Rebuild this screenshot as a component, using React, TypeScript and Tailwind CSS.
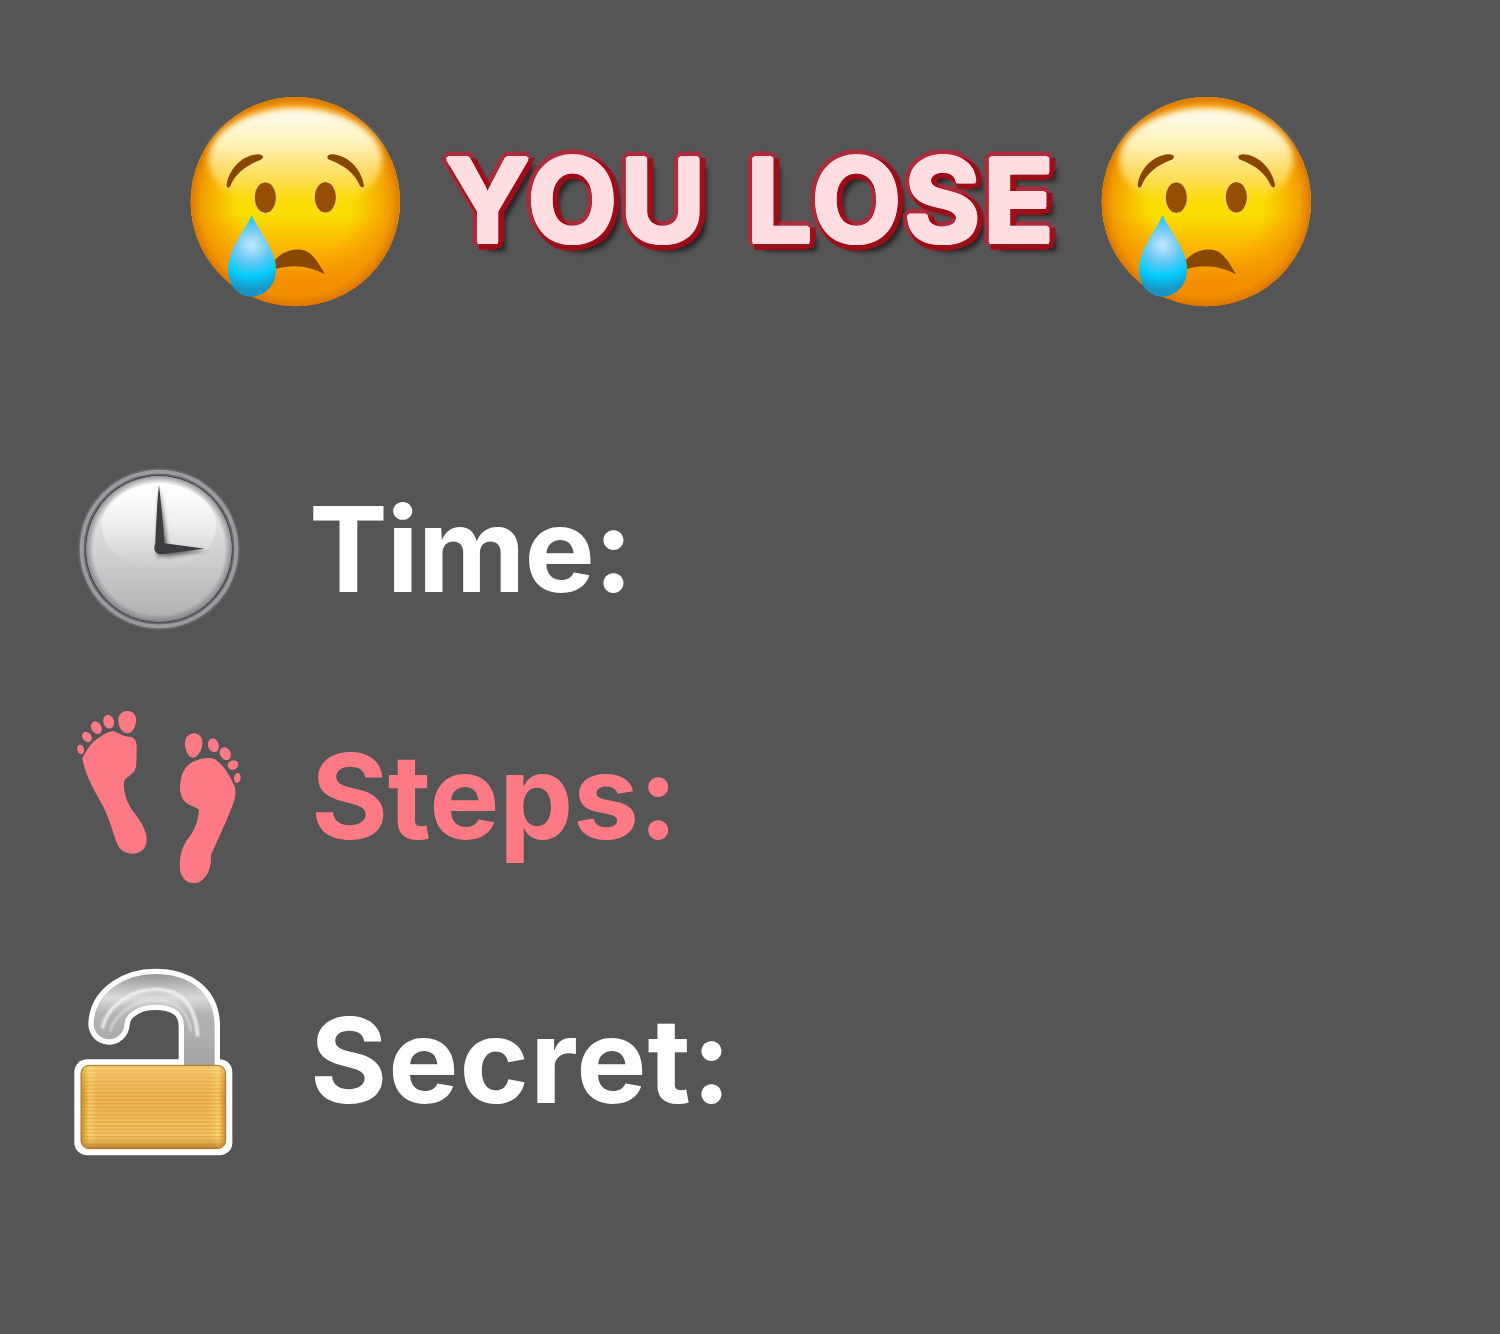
const titleGlow =
  '[text-shadow:2px_0_0_#ffdde0,-2px_0_0_#ffdde0,0_2px_0_#ffdde0,0_-2px_0_#ffdde0,1.5px_1.5px_0_#ffdde0,-1.5px_1.5px_0_#ffdde0,1.5px_-1.5px_0_#ffdde0,-1.5px_-1.5px_0_#ffdde0,8px_0_1px_#9c0f18,0_8px_1px_#9c0f18,6px_6px_1px_#9c0f18,6px_3px_1px_#9c0f18,3px_6px_1px_#9c0f18,-6px_0_1px_#ad2b3b,6px_0_1px_#ad2b3b,0_-6px_1px_#ad2b3b,0_6px_1px_#ad2b3b,4px_4px_1px_#ad2b3b,-4px_4px_1px_#ad2b3b,4px_-4px_1px_#ad2b3b,-4px_-4px_1px_#ad2b3b,-6px_2px_1px_#ad2b3b,-6px_-2px_1px_#ad2b3b,2px_-6px_1px_#ad2b3b,-2px_-6px_1px_#ad2b3b,9px_9px_5px_#00000099]';

function SadFace() {
  return (
    <svg viewBox="0 0 690 690" className="h-[230px] w-[230px] shrink-0">
      <defs>
        <linearGradient id="faceBase" x1="0" y1="37" x2="0" y2="662" gradientUnits="userSpaceOnUse">
          <stop offset="0" stopColor="#fcc400" />
          <stop offset="0.56" stopColor="#f9de00" />
          <stop offset="0.78" stopColor="#fba800" />
          <stop offset="1" stopColor="#ea6400" />
        </linearGradient>
        <radialGradient id="faceEdge" cx="346" cy="350" r="314" gradientUnits="userSpaceOnUse">
          <stop offset="0.55" stopColor="#f59a00" stopOpacity="0" />
          <stop offset="0.9" stopColor="#f29400" stopOpacity="0.85" />
          <stop offset="1" stopColor="#dc7800" />
        </radialGradient>
        <linearGradient id="faceShine" x1="0" y1="68" x2="0" y2="385" gradientUnits="userSpaceOnUse">
          <stop offset="0" stopColor="#fffdf5" />
          <stop offset="0.35" stopColor="#fff2b8" />
          <stop offset="0.7" stopColor="#fde070" stopOpacity="0.7" />
          <stop offset="1" stopColor="#ffe400" stopOpacity="0" />
        </linearGradient>
        <radialGradient id="tearFill" cx="215" cy="480" r="135" gradientUnits="userSpaceOnUse">
          <stop offset="0" stopColor="#c6e6ff" />
          <stop offset="0.4" stopColor="#62c8f4" />
          <stop offset="0.7" stopColor="#02cdfb" />
          <stop offset="1" stopColor="#1a96c6" />
        </radialGradient>
        <filter id="shineBlur">
          <feGaussianBlur stdDeviation="10" />
        </filter>
      </defs>
      <circle cx="346" cy="350" r="314" fill="url(#faceBase)" />
      <circle cx="346" cy="350" r="314" fill="url(#faceEdge)" />
      <ellipse cx="346" cy="225" rx="260" ry="156" fill="url(#faceShine)" filter="url(#shineBlur)" />
      <path d="M140 300C145 260 180 210 235 208C255 210 250 222 240 225C200 240 165 265 150 305C145 310 140 308 140 300Z" fill="#8a4600" />
      <path d="M552 300C545 260 510 210 455 208C437 210 440 222 450 225C490 240 525 265 540 303C547 310 552 307 552 300Z" fill="#8a4600" />
      <ellipse cx="256" cy="338" rx="33" ry="47" fill="#964e05" stroke="#ffeeb0" strokeWidth="2" />
      <ellipse cx="436" cy="337" rx="33" ry="47" fill="#964e05" stroke="#ffeeb0" strokeWidth="2" />
      <path d="M285 525C310 495 365 480 395 510C410 525 425 550 435 568C395 545 340 535 288 552Z" fill="#8a4700" />
      <path d="M215 390C230 430 288 490 288 555C288 605 250 635 215 635C175 635 144 600 144 555C144 490 200 430 215 390Z" fill="url(#tearFill)" />
    </svg>
  );
}

function ClockIcon() {
  return (
    <svg viewBox="0 0 540 540" className="ml-[5px] h-[180px] w-[180px] shrink-0">
      <defs>
        <linearGradient id="clockFace" x1="0" y1="50" x2="0" y2="485" gradientUnits="userSpaceOnUse">
          <stop offset="0" stopColor="#ffffff" />
          <stop offset="0.4" stopColor="#dadadb" />
          <stop offset="1" stopColor="#aeafb1" />
        </linearGradient>
        <linearGradient id="clockShine" x1="0" y1="70" x2="0" y2="325" gradientUnits="userSpaceOnUse">
          <stop offset="0" stopColor="#ffffff" stopOpacity="0.8" />
          <stop offset="1" stopColor="#ffffff" stopOpacity="0.02" />
        </linearGradient>
        <radialGradient id="clockRim" cx="267" cy="267" r="218" gradientUnits="userSpaceOnUse">
          <stop offset="0.9" stopColor="#77787a" stopOpacity="0" />
          <stop offset="1" stopColor="#77787a" stopOpacity="0.75" />
        </radialGradient>
        <filter id="handShadow" x="-30%" y="-30%" width="160%" height="160%">
          <feGaussianBlur stdDeviation="6" />
        </filter>
      </defs>
      <circle cx="267" cy="267" r="243" fill="#66676a" />
      <circle cx="267" cy="267" r="232" fill="none" stroke="#9a9b9d" strokeWidth="12" />
      <circle cx="267" cy="267" r="221" fill="#3f4042" />
      <circle cx="267" cy="267" r="218" fill="url(#clockFace)" />
      <circle cx="267" cy="267" r="218" fill="url(#clockRim)" />
      <ellipse cx="267" cy="198" rx="172" ry="127" fill="url(#clockShine)" />
      <path d="M268 82L292 255L290 285L262 290L262 250ZM262 258L412 272L290 290Z" fill="#000000" opacity="0.55" filter="url(#handShadow)" />
      <path d="M267 75C271 105 280 200 284 250L403 266L280 282C266 284 254 278 253 266C253 260 254 255 256 250C258 200 263 105 267 75Z" fill="#3d3d41" />
    </svg>
  );
}

function FeetIcon() {
  return (
    <svg viewBox="0 0 570 585" className="h-[195px] w-[190px] shrink-0" fill="#ff7a85">
      <path d="M52 175C60 160 75 130 95 118C115 105 135 90 150 95C165 100 175 110 195 110C210 112 215 125 215 140C215 165 215 190 212 205C205 225 185 230 178 242C172 265 185 310 205 335C225 360 245 390 245 420C245 445 225 462 200 461C175 460 160 445 152 420C140 385 130 350 115 320C90 275 60 225 52 175Z" />
      <path d="M160 60C160 42 172 33 188 33C205 33 214 45 213 62C212 80 202 100 188 100C172 100 160 80 160 60Z" />
      <ellipse cx="131" cy="65" rx="16" ry="21" transform="rotate(-15 131 65)" />
      <ellipse cx="94" cy="83" rx="15" ry="20" transform="rotate(-30 94 83)" />
      <ellipse cx="66" cy="111" rx="13" ry="17" transform="rotate(-40 66 111)" />
      <ellipse cx="47" cy="148" rx="10" ry="14" transform="rotate(-10 47 148)" />
      <path d="M345 265C345 225 360 195 385 185C405 175 430 170 450 178C475 195 495 225 510 262C515 290 505 310 495 335C475 385 455 425 438 465C440 495 430 530 405 545C375 558 350 540 345 510C342 475 350 440 370 415C390 390 400 360 402 330C395 320 375 318 360 305C350 295 345 280 345 265Z" />
      <path d="M360 125C362 108 375 100 390 100C405 102 413 115 412 132C410 152 398 173 384 173C368 172 358 145 360 125Z" />
      <ellipse cx="445" cy="136" rx="16" ry="21" transform="rotate(-15 445 136)" />
      <ellipse cx="481" cy="161" rx="16" ry="20" transform="rotate(-30 481 161)" />
      <ellipse cx="504" cy="195" rx="16" ry="14" transform="rotate(-25 504 195)" />
      <ellipse cx="517" cy="234" rx="10" ry="15" transform="rotate(10 517 234)" />
    </svg>
  );
}

function LockIcon() {
  const shackle = 'M132 192C135 125 205 88 270 88C350 88 403 125 403 200L403 330';
  return (
    <svg viewBox="0 0 540 615" className="h-[205px] w-[180px] shrink-0">
      <defs>
        <linearGradient id="lockMetal" x1="0" y1="45" x2="0" y2="320" gradientUnits="userSpaceOnUse">
          <stop offset="0" stopColor="#9a9b9c" />
          <stop offset="0.25" stopColor="#dadada" />
          <stop offset="0.42" stopColor="#b2b3b4" />
          <stop offset="1" stopColor="#a3a5a6" />
        </linearGradient>
        <linearGradient id="lockBody" x1="48" y1="0" x2="482" y2="0" gradientUnits="userSpaceOnUse">
          <stop offset="0" stopColor="#c4842a" />
          <stop offset="0.06" stopColor="#f8dc74" />
          <stop offset="0.11" stopColor="#efc162" />
          <stop offset="0.89" stopColor="#efc162" />
          <stop offset="0.95" stopColor="#f8dc74" />
          <stop offset="1" stopColor="#c4842a" />
        </linearGradient>
        <linearGradient id="lockShade" x1="0" y1="316" x2="0" y2="566" gradientUnits="userSpaceOnUse">
          <stop offset="0" stopColor="#ffe08a" stopOpacity="0.45" />
          <stop offset="0.4" stopColor="#e48f2c" stopOpacity="0.2" />
          <stop offset="0.85" stopColor="#f0c060" stopOpacity="0.1" />
          <stop offset="1" stopColor="#a86818" stopOpacity="0.85" />
        </linearGradient>
        <pattern id="lockStripes" width="10" height="11" patternUnits="userSpaceOnUse">
          <rect width="10" height="4" fill="#d67f14" fillOpacity="0.42" />
        </pattern>
        <filter id="metalBlur">
          <feGaussianBlur stdDeviation="3" />
        </filter>
      </defs>
      <path d={shackle} fill="none" stroke="#ffffff" strokeWidth="124" strokeLinecap="round" />
      <rect x="28" y="298" width="474" height="288" rx="38" fill="#ffffff" />
      <path d={shackle} fill="none" stroke="url(#lockMetal)" strokeWidth="92" strokeLinecap="round" />
      <path d="M112 205C125 140 200 88 270 88C345 88 392 130 398 230" fill="none" stroke="#f6f6f6" strokeWidth="10" opacity="0.9" filter="url(#metalBlur)" />
      <path d="M135 215C150 160 210 120 270 120C330 120 368 150 378 215" fill="none" stroke="#e8e8e8" strokeWidth="7" opacity="0.7" filter="url(#metalBlur)" />
      <rect x="48" y="316" width="434" height="250" rx="24" fill="url(#lockBody)" stroke="#a8752c" strokeWidth="3" />
      <rect x="50" y="318" width="430" height="246" rx="22" fill="url(#lockStripes)" />
      <rect x="50" y="318" width="430" height="246" rx="22" fill="url(#lockShade)" />
    </svg>
  );
}

export default function App() {
  return (
    <div className="h-[1334px] w-full overflow-hidden bg-[#555555] font-['Inter','Liberation_Sans',Arial,sans-serif] font-bold">
      <div className="flex items-center pl-[180px] pt-[85px]">
        <SadFace />
        <h1 className={`ml-[35px] w-[646px] whitespace-nowrap text-[116px] font-bold leading-none tracking-[3px] text-[#ffdde0] [word-spacing:8px] ${titleGlow}`}>
          YOU LOSE
        </h1>
        <SadFace />
      </div>

      <div className="mt-[145px] flex flex-col gap-[60px] pl-[65px]">
        <div className="flex items-center">
          <div className="w-[244px]">
            <ClockIcon />
          </div>
          <span className="mb-[2px] text-[118px] leading-none tracking-[-1px] text-white">
            Time:
          </span>
        </div>
        <div className="flex items-center">
          <div className="w-[246px]">
            <FeetIcon />
          </div>
          <span className="mb-[4px] text-[118px] leading-none tracking-[-0.5px] text-[#ff7a85]">
            Steps:
          </span>
        </div>
        <div className="mt-[5px] flex items-center">
          <div className="w-[245px]">
            <LockIcon />
          </div>
          <span className="mb-[5px] text-[118px] leading-none tracking-[1px] text-white">
            Secret:
          </span>
        </div>
      </div>
    </div>
  );
}
